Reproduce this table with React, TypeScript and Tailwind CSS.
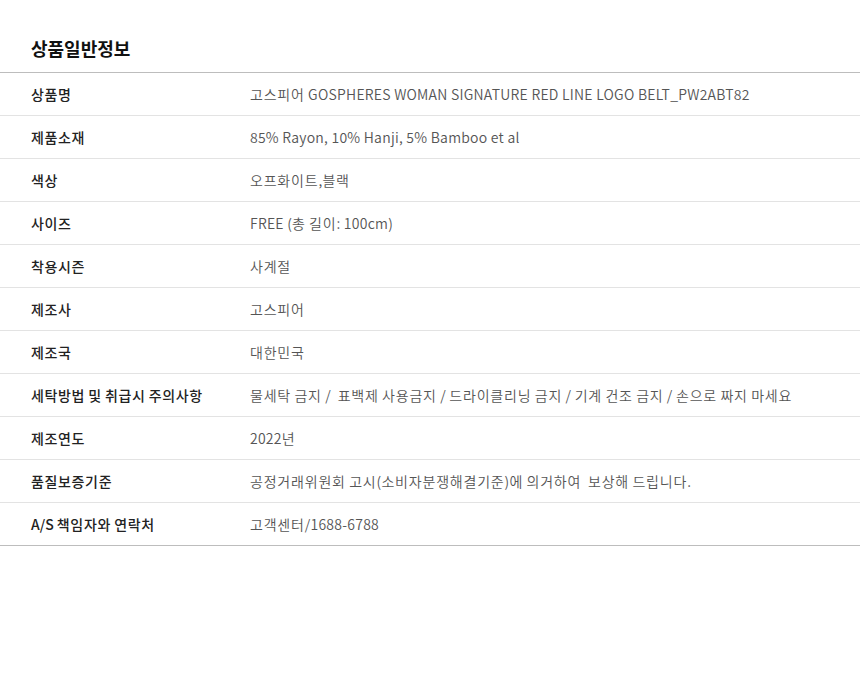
const rows: [string, string][] = [
  ['상품명', '고스피어 GOSPHERES WOMAN SIGNATURE RED LINE LOGO BELT_PW2ABT82'],
  ['제품소재', '85% Rayon, 10% Hanji, 5% Bamboo et al'],
  ['색상', '오프화이트,블랙'],
  ['사이즈', 'FREE (총 길이: 100cm)'],
  ['착용시즌', '사계절'],
  ['제조사', '고스피어'],
  ['제조국', '대한민국'],
  ['세탁방법 및 취급시 주의사항', '물세탁 금지 /  표백제 사용금지 / 드라이클리닝 금지 / 기계 건조 금지 / 손으로 짜지 마세요'],
  ['제조연도', '2022년'],
  ['품질보증기준', '공정거래위원회 고시(소비자분쟁해결기준)에 의거하여  보상해 드립니다.'],
  ['A/S 책임자와 연락처', '고객센터/1688-6788'],
];

// hangul runs get a little extra spacing so they match the reference widths
function Ko({ text, ko, latin = '' }: { text: string; ko: string; latin?: string }) {
  return (
    <>
      {text.split(/([\uAC00-\uD7A3]+)/).map((part, i) =>
        /[\uAC00-\uD7A3]/.test(part) ? (
          <span key={i} className={ko}>
            {part}
          </span>
        ) : (
          <span key={i} className={latin}>
            {part}
          </span>
        )
      )}
    </>
  );
}

export default function App() {
  return (
    <div
      className="w-[860px] h-[695px] bg-white"
      style={{ fontFamily: '"Noto Sans CJK KR", "Noto Sans", sans-serif' }}
    >
      <h2 className="pt-[36px] pl-[31px] h-[72px] text-[18px] leading-[24px] font-bold text-[#111]">
        상품일반정보
      </h2>
      <div className="border-t border-b border-[#bdbdbd]">
        {rows.map(([label, value], i) => (
          <div
            key={i}
            className={
              'flex items-center ' +
              (i < rows.length - 1 ? 'h-[43px] border-b border-[#e3e3e3]' : 'h-[42px]')
            }
          >
            <div className="w-[250px] pl-[31px] text-[14px] font-medium text-[#222] whitespace-nowrap">
              <Ko text={label} ko="tracking-[0.65px]" />
            </div>
            <div className="text-[14px] font-[350] text-[#555] whitespace-pre">
              <Ko text={value} ko="tracking-[0.8px]" latin="tracking-[0.25px]" />
            </div>
          </div>
        ))}
      </div>
    </div>
  );
}
